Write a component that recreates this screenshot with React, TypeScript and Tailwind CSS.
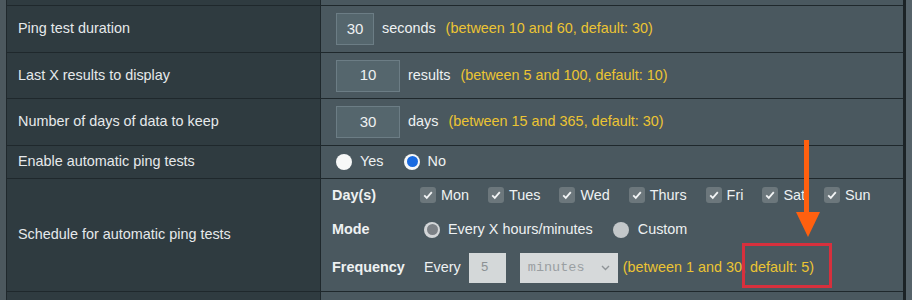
import React from 'react';

const days = ['Mon', 'Tues', 'Wed', 'Thurs', 'Fri', 'Sat', 'Sun'];

const Check = ({ label }) => (
  <div className="flex items-center mr-[19px]">
    <span className="w-4 h-4 rounded-[3px] bg-[#6c777c] flex items-center justify-center">
      <svg width="12" height="12" viewBox="0 0 12 12">
        <path d="M2.2 6.3 L4.8 8.9 L9.8 3.2" fill="none" stroke="#f2f4f5" strokeWidth="1.8" />
      </svg>
    </span>
    <span className="ml-[5px]">{label}</span>
  </div>
);

const NumberBox = ({ value, wide }) => (
  <div
    className={`${wide ? 'w-[64px]' : 'w-[38px]'} h-[32px] border border-[#6c7d85] bg-[#55666d] flex items-center justify-center text-[#eef1f2] text-[15px]`}
  >
    {value}
  </div>
);

const Row = ({ label, height, children }) => (
  <div className={`grid grid-cols-[314px_1fr] border-b border-[#1f282c] ${height}`}>
    <div className="bg-[#2f3b40] border-r border-[#1f282c] pl-[11px] flex items-center text-[#e6e9eb]">
      {label}
    </div>
    <div className="bg-[#4a585f] flex items-center text-[#eef1f2]">{children}</div>
  </div>
);

const Hint = ({ children }) => <span className="text-[#ecc433]">{children}</span>;

export default function App() {
  return (
    <div className="relative w-[912px] h-[300px] overflow-hidden flex bg-[#4c585e] font-['Liberation_Sans',Arial,sans-serif] text-[14.4px]">
      <div className="w-[6px] shrink-0" />
      <div className="w-[897px] shrink-0 border-l border-[#1f282c] flex flex-col">
        <div className="grid grid-cols-[314px_1fr] border-b border-[#1f282c] h-[6px]">
          <div className="bg-[#2f3b40] border-r border-[#1f282c]" />
          <div className="bg-[#4a585f]" />
        </div>

        <Row label="Ping test duration" height="h-[47px]">
          <div className="pl-[15px] flex items-center">
            <NumberBox value="30" wide={false} />
            <span className="ml-[8px]">seconds</span>
            <span className="ml-[10px]">
              <Hint>(between 10 and 60, default: 30)</Hint>
            </span>
          </div>
        </Row>

        <Row label="Last X results to display" height="h-[46px]">
          <div className="pl-[15px] flex items-center">
            <NumberBox value="10" wide />
            <span className="ml-[8px]">results</span>
            <span className="ml-[10px]">
              <Hint>(between 5 and 100, default: 10)</Hint>
            </span>
          </div>
        </Row>

        <Row label="Number of days of data to keep" height="h-[47px]">
          <div className="pl-[15px] flex items-center">
            <NumberBox value="30" wide />
            <span className="ml-[8px]">days</span>
            <span className="ml-[10px]">
              <Hint>(between 15 and 365, default: 30)</Hint>
            </span>
          </div>
        </Row>

        <Row label="Enable automatic ping tests" height="h-[33px]">
          <div className="pl-[15px] flex items-center">
            <span className="w-4 h-4 rounded-full bg-[#f7f8f8]" />
            <span className="ml-[8px]">Yes</span>
            <span className="ml-[21px] w-4 h-4 rounded-full bg-[#f7f8f8] flex items-center justify-center">
              <span className="w-[11px] h-[11px] rounded-full bg-[#1a6be0]" />
            </span>
            <span className="ml-[7px]">No</span>
          </div>
        </Row>

        <div className="grid grid-cols-[314px_1fr] border-b border-[#1f282c] h-[113px]">
          <div className="bg-[#2f3b40] border-r border-[#1f282c] pl-[11px] flex items-center text-[#e6e9eb]">
            Schedule for automatic ping tests
          </div>
          <div className="bg-[#4a585f] pl-[11px] pt-[2px] flex flex-col text-[#eef1f2]">
            <div className="h-[29px] flex items-center">
              <span className="w-[88px] font-bold">Day(s)</span>
              {days.map(d => (
                <Check key={d} label={d} />
              ))}
            </div>
            <div className="h-[39px] flex items-center">
              <span className="w-[92px] font-bold">Mode</span>
              <span className="w-4 h-4 rounded-full bg-[#d3d6d8] flex items-center justify-center">
                <span className="w-[11px] h-[11px] rounded-full bg-[#7c8186]" />
              </span>
              <span className="ml-[8px]">Every X hours/minutes</span>
              <span className="ml-[20px] w-4 h-4 rounded-full bg-[#c3c7c9]" />
              <span className="ml-[9px]">Custom</span>
            </div>
            <div className="h-[38px] flex items-center">
              <span className="w-[92px] font-bold">Frequency</span>
              <span>Every</span>
              <div className="ml-[8px] w-[37px] h-[30px] bg-[#d4d8d9] flex items-center pl-[12px] text-[#8b9194] font-['Liberation_Mono',monospace] text-[13px]">
                5
              </div>
              <div className="ml-[14px] w-[98px] h-[30px] bg-[#d6d9da] flex items-center justify-between pl-[8px] pr-[8px] text-[#9a9fa2] font-['Liberation_Mono',monospace] text-[13.5px]">
                <span>minutes</span>
                <svg width="9" height="6" viewBox="0 0 9 6">
                  <path d="M1 1 L4.5 4.5 L8 1" fill="none" stroke="#8f9497" strokeWidth="1.4" />
                </svg>
              </div>
              <span className="ml-[5px]">
                <Hint>(between 1 and 30, default: 5)</Hint>
              </span>
            </div>
          </div>
        </div>

        <div className="grid grid-cols-[314px_1fr] flex-1">
          <div className="bg-[#2f3b40] border-r border-[#1f282c]" />
          <div className="bg-[#4a585f]" />
        </div>
      </div>
      <div className="w-[3px] shrink-0 bg-[#1c2326]" />
      <div className="flex-1 bg-[#56636a]" />

      {/* annotation overlay */}
      <svg className="absolute left-[792px] top-[140px]" width="32" height="98" viewBox="0 0 32 98">
        <rect x="12" y="0" width="5" height="74" fill="#ff600f" />
        <polygon points="4,72 28,72 16,97" fill="#ff600f" />
      </svg>
      <div className="absolute left-[742px] top-[243px] w-[90px] h-[45px] border-[3px] border-[#d7303d]" />
    </div>
  );
}
